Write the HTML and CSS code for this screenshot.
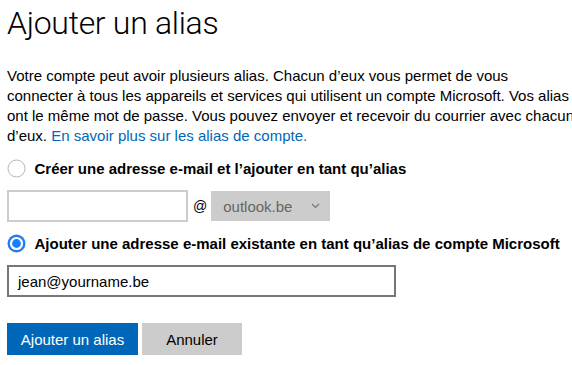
FILE: index.html
```html
<!DOCTYPE html>
<html lang="fr">
<head>
<meta charset="utf-8">
<link rel="stylesheet" href="styles.css">
</head>
<body>
<div class="page">
  <h1 class="title">Ajouter un alias</h1>
  <p class="intro">Votre compte peut avoir plusieurs alias. Chacun d’eux vous permet de vous connecter à tous les appareils et services qui utilisent un compte Microsoft. Vos alias ont le même mot de passe. Vous pouvez envoyer et recevoir du courrier avec chacun d’eux. <a class="link" href="#">En savoir plus sur les alias de compte.</a></p>

  <div class="option">
    <svg class="radio" width="19" height="19" viewBox="0 0 19 19"><circle cx="9.5" cy="9.5" r="8.5" fill="#fff" stroke="#b4b4b4" stroke-width="1"/></svg>
    <span class="opt-label">Créer une adresse e-mail et l’ajouter en tant qu’alias</span>
  </div>
  <div class="row">
    <div class="input light"></div>
    <span class="at">@</span>
    <div class="select">
      <span>outlook.be</span>
      <svg class="chev" width="9" height="6" viewBox="0 0 9 6"><path d="M1 1l3.5 3.5L8 1" fill="none" stroke="#777" stroke-width="1.2"/></svg>
    </div>
  </div>

  <div class="option second">
    <svg class="radio" width="19" height="19" viewBox="0 0 19 19"><circle cx="9.5" cy="9.5" r="9" fill="#1a7ef5"/><circle cx="9.5" cy="9.5" r="6.6" fill="#fff"/><circle cx="9.5" cy="9.5" r="4.4" fill="#1a7ef5"/></svg>
    <span class="opt-label">Ajouter une adresse e-mail existante en tant qu’alias de compte Microsoft</span>
  </div>
  <div class="row">
    <div class="input dark">jean@yourname.be</div>
  </div>

  <div class="buttons">
    <button class="btn primary">Ajouter un alias</button>
    <button class="btn secondary">Annuler</button>
  </div>
</div>
</body>
</html>
```
FILE: styles.css
```css
html { overflow: hidden; }
body {
  margin: 0;
  background: #fff;
  color: #000;
  font-family: "Liberation Sans", Arial, sans-serif;
}
.page {
  width: 568px;
  padding: 0 0 0 7px;
}
.title {
  margin: 0;
  padding-top: 3px;
  font-family: Roboto, "Liberation Sans", sans-serif;
  font-weight: 300;
  font-size: 32px;
  line-height: 40px;
  letter-spacing: -0.3px;
}
.intro {
  margin: 23px 0 0 0;
  font-size: 15px;
  line-height: 20px;
}
.link { color: #0067b8; text-decoration: none; }
.option {
  display: flex;
  align-items: center;
  gap: 9px;
  margin-top: 11px;
  height: 22px;
}
.option.second { margin-top: 10px; }
.radio { flex: none; margin-left: -0.5px; }
.opt-label { font-weight: bold; font-size: 15px; white-space: nowrap; }
.row {
  display: flex;
  align-items: center;
  margin-top: 11px;
}
.input {
  box-sizing: border-box;
  height: 32px;
  font-size: 15px;
  display: flex;
  align-items: center;
  padding-left: 9px;
}
.input.light { width: 181px; border: 2px solid #ccc; }
.input.dark { width: 389px; border: 2px solid #777; color: #000; }
.at { font-size: 14px; margin: 0 4px 0 5px; }
.select {
  box-sizing: border-box;
  width: 119px;
  height: 30px;
  background: #ccc;
  color: #666;
  font-size: 15px;
  display: flex;
  align-items: center;
  justify-content: space-between;
  padding: 0 10px 0 12px;
}
.chev { flex: none; }
.buttons {
  display: flex;
  gap: 4px;
  margin-top: 26px;
}
.btn {
  border: none;
  height: 32px;
  font-family: "Liberation Sans", Arial, sans-serif;
  font-size: 15px;
  padding: 0;
}
.primary { width: 131px; background: #0067b8; color: #fff; }
.secondary { width: 100px; background: #ccc; color: #000; }
```
